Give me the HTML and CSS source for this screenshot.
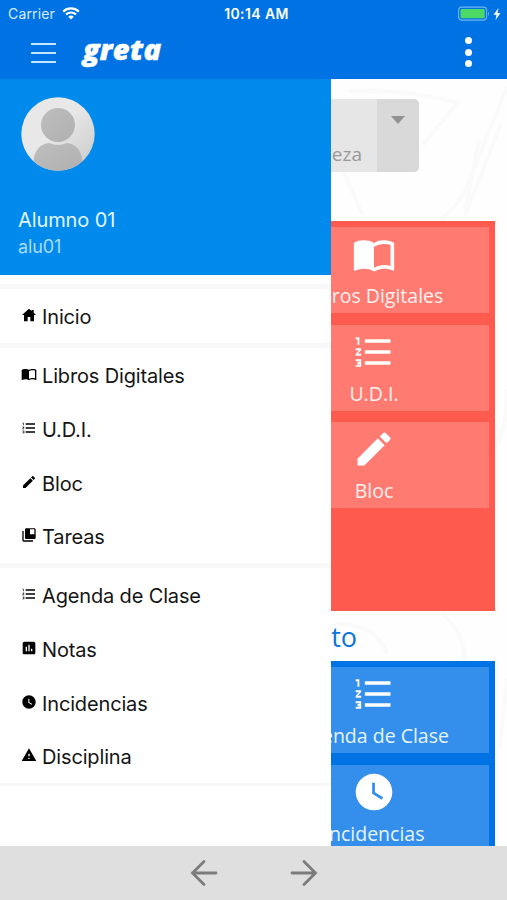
FILE: index.html
```html
<!DOCTYPE html>
<html lang="es">
<head>
<meta charset="utf-8">
<meta name="viewport" content="width=device-width, initial-scale=1">
<title>greta</title>
<link rel="stylesheet" href="styles.css">
</head>
<body>
<svg class="sprite" aria-hidden="true">
  <symbol id="home" viewBox="0 0 24 24"><path d="M12 2.500 1.500 12H4.500v9.500H10V15h4v6.500h5.500V12h3L19 8.800V4.500h-3v1.600z"/></symbol>
  <symbol id="book" viewBox="0 0 24 24"><path d="M21 5c-1.110-.35-2.330-.5-3.500-.5-1.950 0-4.050.4-5.500 1.500-1.450-1.100-3.550-1.500-5.500-1.500S2.450 4.900 1 6v14.650c0 .25.25.5.5.5.1 0 .15-.05.25-.05C3.100 20.450 5.050 20 6.500 20c1.950 0 4.050.4 5.500 1.500 1.350-.85 3.800-1.500 5.500-1.500 1.650 0 3.350.3 4.750 1.050.1.05.15.05.25.05.25 0 .5-.25.5-.5V6c-.6-.45-1.250-.75-2-1zm0 13.500c-1.100-.35-2.300-.5-3.500-.5-1.700 0-4.150.65-5.500 1.500V8c1.350-.85 3.800-1.500 5.500-1.500 1.200 0 2.400.15 3.500.5v11.500z"/></symbol>
  <symbol id="list" viewBox="0 0 24 24"><path d="M2 17h2v.5H3v1h1v.5H2v1h3v-4H2v1zm1-9h1V4H2v1h1v3zm-1 3h1.800L2 13.100v.9h3v-1H3.200L5 10.900V10H2v1zm5-6v2h14V5H7zm0 14h14v-2H7v2zm0-6h14v-2H7v2z"/></symbol>
  <symbol id="pencil" viewBox="0 0 24 24"><path d="M3 17.250V21h3.750L17.810 9.940l-3.750-3.750L3 17.250zM20.710 7.040c.39-.39.39-1.020 0-1.410l-2.340-2.340c-.39-.39-1.020-.39-1.410 0l-1.830 1.830 3.750 3.750 1.830-1.830z"/></symbol>
  <symbol id="tasks" viewBox="0 0 24 24"><path d="M4 6H2v14c0 1.100.9 2 2 2h14v-2H4V6zM20 2H8c-1.100 0-2 .9-2 2v12c0 1.100.9 2 2 2h12c1.100 0 2-.9 2-2V4c0-1.100-.9-2-2-2zm0 9h-6.500V3.500H20z"/></symbol>
  <symbol id="chart" viewBox="0 0 24 24"><path d="M19 2.500H5C3.600 2.500 2.500 3.600 2.500 5v14c0 1.400 1.100 2.500 2.500 2.500h14c1.400 0 2.500-1.100 2.500-2.500V5c0-1.400-1.100-2.500-2.500-2.500zM9 17H7v-7h2v7zm4 0h-2V7h2v10zm4 0h-2v-4h2v4z"/></symbol>
  <symbol id="clock" viewBox="0 0 24 24"><path d="M12 2C6.500 2 2 6.500 2 12s4.500 10 10 10 10-4.500 10-10S17.500 2 12 2zm4.200 14.200L11 13V7h1.500v5.200l4.500 2.700-.8 1.300z"/></symbol>
  <symbol id="warning" viewBox="0 0 24 24"><path d="M1 21h22L12 2 1 21zm12-3h-2v-2h2v2zm0-4h-2v-4h2v4z"/></symbol>
</svg>

<header class="topbar">
  <div class="status">
    <div class="status-left"><span>Carrier</span>
      <svg class="wifi" viewBox="0 0 18 13"><g fill="none" stroke="#fff" stroke-width="2.200"><path d="M1.200 4.600a11.200 11.200 0 0 1 15.600 0M4 7.500a7.200 7.200 0 0 1 10 0"/></g><path fill="#fff" d="M9 12.600 6.200 9.800a4 4 0 0 1 5.600 0z"/></svg>
    </div>
    <span class="time">10:14 AM</span>
    <svg class="battery" viewBox="0 0 44 16"><rect x=".6" y="1.100" width="28" height="13" rx="3" fill="none" stroke="#6fb4f5" stroke-width="1.100"/><rect x="2.500" y="3" width="24.200" height="9.300" rx="1.200" fill="#4cd964"/><path d="M30 5.500q2 2.200 0 4.500z" fill="#6fb4f5"/><path d="M40.500 2 35.500 8.700h3L37.500 14l5-7h-3z" fill="#fff"/></svg>
  </div>
  <div class="toolbar">
    <div class="burger"><i></i><i></i><i></i></div>
    <span class="logo">greta</span>
    <div class="more"><i></i><i></i><i></i></div>
  </div>
</header>

<main class="stage">
  <div class="page">
    <svg class="sketch" viewBox="0 0 176 767"><g fill="none" stroke="#fafafa" stroke-width="4"><path d="M18 12q60-2 108 12L92 66M176 8 134 112q-12 20-24 28M170 45l-36 92M148 62l-14 70M12 92l20 44M6 545q40 0 50 30M112 535q22 22 22 48M164 370q14-28 12-60M176 600l-8 70"/></g></svg>
    <div class="select"><span class="select-text">Naturaleza</span><span class="select-arrow"></span></div>
    <section class="panel red">
      <div class="tile"><svg><use href="#book"/></svg><span>Libros Digitales</span></div>
      <div class="tile"><svg><use href="#list"/></svg><span>U.D.I.</span></div>
      <div class="tile"><svg><use href="#pencil"/></svg><span>Bloc</span></div>
    </section>
    <h2 class="heading">Seguimiento</h2>
    <section class="panel blue">
      <div class="tile"><svg><use href="#list"/></svg><span>Agenda de Clase</span></div>
      <div class="tile"><svg><use href="#clock"/></svg><span>Incidencias</span></div>
    </section>
  </div>

  <aside class="drawer">
    <div class="profile">
      <svg class="avatar" viewBox="0 0 74 74"><defs><linearGradient id="bg" x1="0" y1="0" x2="1" y2="1"><stop offset=".45" stop-color="#e8e8e9"/><stop offset="1" stop-color="#c8c8c9"/></linearGradient><linearGradient id="fg" x1="0" y1="0" x2="1" y2="1"><stop offset="0" stop-color="#bebebe"/><stop offset="1" stop-color="#b0b0b1"/></linearGradient><clipPath id="round"><circle cx="37" cy="37" r="36.700"/></clipPath></defs><g clip-path="url(#round)"><path fill="url(#bg)" d="M0 0h74v74H0z"/><circle cx="37" cy="28" r="17" fill="url(#fg)"/><path fill="url(#fg)" d="M12.500 66c0-13 8-19.500 15.500-20 6 2.600 12 2.600 18 0 7.500.5 15.500 7 15.500 20v8h-49z"/></g></svg>
      <div class="name">Alumno 01</div>
      <div class="user">alu01</div>
    </div>
    <nav class="menu">
      <div class="group"><a><svg><use href="#home"/></svg>Inicio</a></div>
      <div class="group">
        <a><svg><use href="#book"/></svg>Libros Digitales</a>
        <a><svg><use href="#list"/></svg>U.D.I.</a>
        <a><svg><use href="#pencil"/></svg>Bloc</a>
        <a><svg><use href="#tasks"/></svg>Tareas</a>
      </div>
      <div class="group">
        <a><svg><use href="#list"/></svg>Agenda de Clase</a>
        <a><svg><use href="#chart"/></svg>Notas</a>
        <a><svg><use href="#clock"/></svg>Incidencias</a>
        <a><svg><use href="#warning"/></svg>Disciplina</a>
      </div>
    </nav>
  </aside>
</main>

<footer class="bottombar">
  <svg viewBox="0 0 28 28"><path d="M26 14H2.500M14 2.500 2.500 14 14 25.500"/></svg>
  <svg viewBox="0 0 28 28"><path d="M2 14h23.500M14 2.500 25.500 14 14 25.500"/></svg>
</footer>
</body>
</html>
```
FILE: styles.css
```css
* { box-sizing: border-box; }
body {
  margin: 0;
  width: 507px;
  height: 900px;
  overflow: hidden;
  display: grid;
  grid-template-rows: 79px 767px 54px;
  font-family: Inter, "Liberation Sans", sans-serif;
  background: #fff;
}
.sprite { position: absolute; width: 0; height: 0; }

.topbar { background: #0073e4; color: #fff; }
.status {
  height: 27px;
  display: grid;
  grid-template-columns: 1fr auto 1fr;
  align-items: center;
  padding: 0 5px 0 8px;
  font-size: 14px;
}
.status-left { display: flex; align-items: center; gap: 7px; color: #d9edff; letter-spacing: .15px; }
.wifi { width: 18px; height: 13px; }
.time { font-weight: 600; font-size: 14px; letter-spacing: .4px; margin-left: 3px; }
.battery { width: 44px; height: 16px; justify-self: end; }
.toolbar { height: 52px; display: flex; align-items: center; padding: 0 35px 0 31px; }
.burger { width: 25px; height: 20px; margin-top: -1px; display: flex; flex-direction: column; justify-content: space-between; }
.burger i { height: 2px; background: #c4e6ff; }
.logo {
  margin: -9px 0 0 27px;
  font: italic 800 29px/36px "Open Sans", sans-serif;
  letter-spacing: .3px;
  -webkit-text-stroke: .5px #fff;
}
.more { margin: -2px 0 0 auto; display: flex; flex-direction: column; gap: 4.500px; }
.more i { width: 7px; height: 7px; border-radius: 50%; background: #fff; }

.stage { position: relative; overflow: hidden; }
.page { height: 767px; padding: 20px 12px 0; font-family: "Open Sans", sans-serif; background: #fefefe; }
.sketch { position: absolute; left: 331px; top: 0; width: 176px; height: 767px; }
.select {
  position: relative;
  display: flex;
  width: 407px;
  height: 73px;
  border-radius: 5px;
  overflow: hidden;
  background: #e6e6e6;
}
.select-text { flex: 1; align-self: flex-end; text-align: right; padding: 0 15px 4px 0; font-size: 19px; line-height: 27px; color: #999; }
.select-arrow { width: 42px; background: #d9d9d9; display: flex; justify-content: center; padding-top: 17px; }
.select-arrow::before {
  content: "";
  width: 0;
  height: 0;
  border: 7.500px solid transparent;
  border-top: 8px solid #929292;
  border-bottom: 0;
}
.panel {
  position: relative;
  display: grid;
  grid-template-columns: 230px;
  grid-auto-rows: 86px;
  justify-content: end;
  row-gap: 11.700px;
  padding: 6px;
}
.red { margin-top: 49px; height: 390px; background: #ff5a4e; }
.blue { height: 220px; background: #0073e4; }
.red .tile { background: #ff7b71; }
.blue .tile { background: #338feb; }
.tile { display: flex; flex-direction: column; align-items: center; padding-top: 5px; color: #fff; }
.tile svg { width: 44px; height: 44px; fill: #fff; }
.tile span { font-size: 19.500px; line-height: 27px; margin-top: 6px; color: #fff1f0; white-space: nowrap; }
.blue .tile span { color: #e7f4ff; }
.heading {
  position: relative;
  margin: 0;
  width: 345px;
  height: 50px;
  text-align: right;
  font-weight: 400;
  font-size: 27px;
  line-height: 52px;
  color: #0b75d8;
}

.drawer { position: absolute; left: 0; top: 0; width: 331px; height: 767px; background: #fff; }
.profile { height: 196px; padding: 18px 18px 0; background: #008aec; color: #e2f5ff; }
.avatar { display: block; width: 74px; height: 74px; margin-left: 3px; }
.name { margin-top: 36px; font-size: 20px; line-height: 27px; letter-spacing: -.1px; }
.user { font-size: 18px; line-height: 26px; letter-spacing: -.1px; color: #a9dcff; }
.menu { padding-top: 9px; }
.group { border-top: 5px solid #f8f8f8; }
.group:last-child { border-bottom: 3px solid #f8f8f8; }
.menu a {
  display: flex;
  align-items: center;
  height: 53.750px;
  padding: 3px 0 0 21px;
  font-size: 20px;
  letter-spacing: -.15px;
  color: #151515;
}
.menu svg { width: 16px; height: 16px; margin: -4px 5px 0 0; fill: #000; }

.bottombar { background: #dfdfdf; display: flex; justify-content: center; gap: 72px; padding-top: 13px; }
.bottombar svg { width: 28px; height: 28px; fill: none; stroke: #7c7c7c; stroke-width: 2.800; stroke-linecap: round; }
```
